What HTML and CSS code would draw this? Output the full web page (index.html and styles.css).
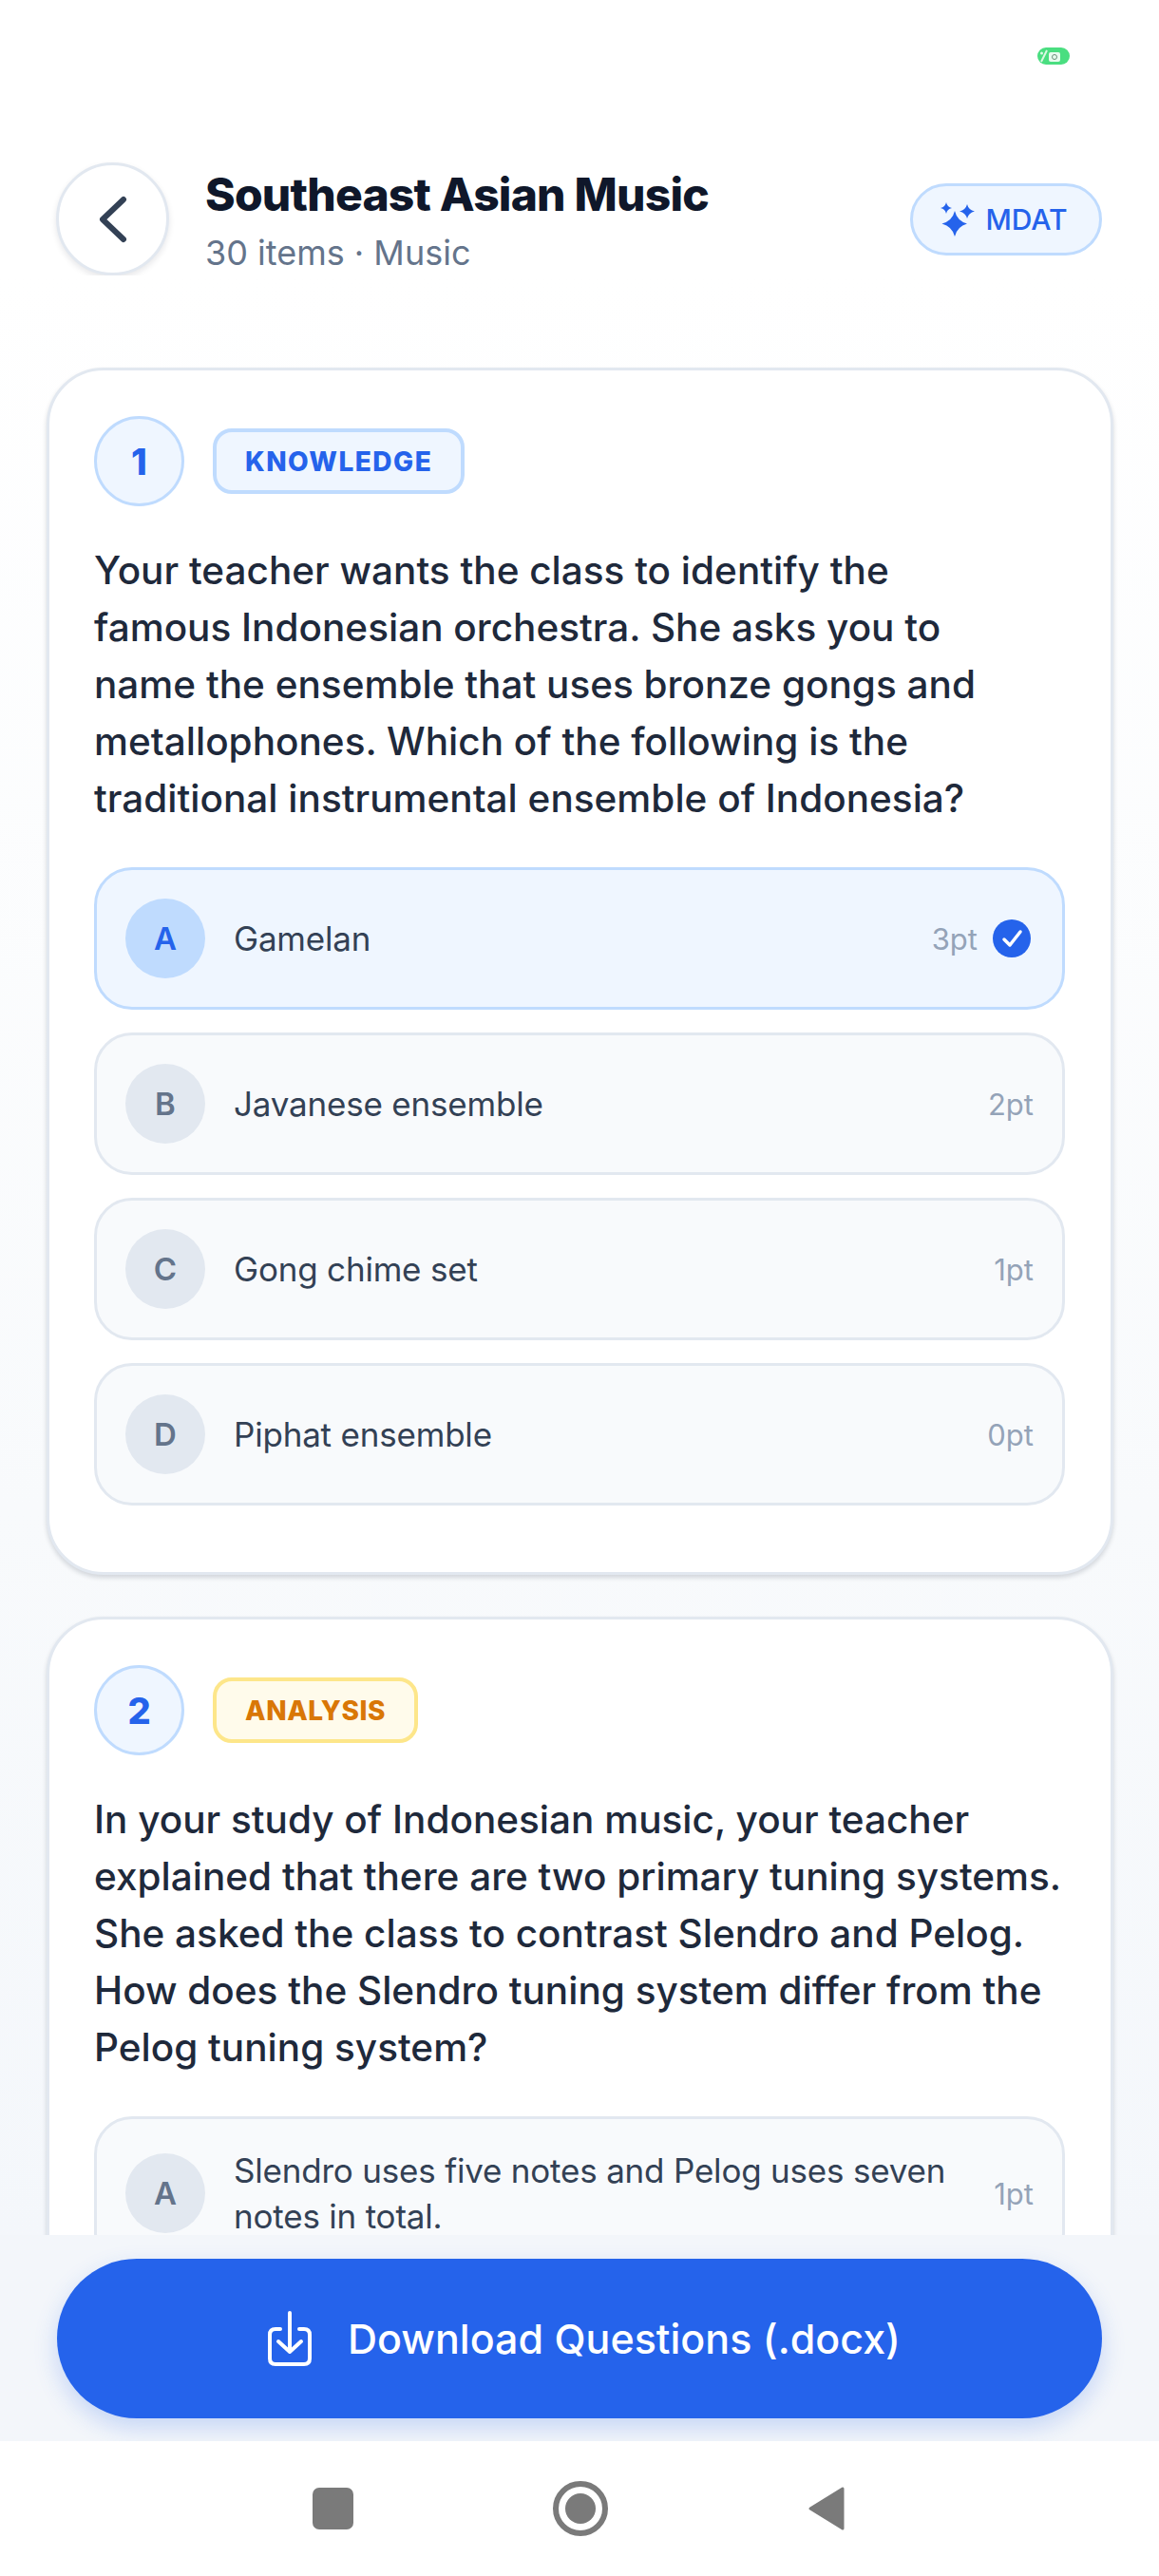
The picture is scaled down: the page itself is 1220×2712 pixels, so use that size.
FILE: index.html
```html
<!DOCTYPE html>
<html lang="en">
<head>
    <meta charset="UTF-8">
    <title>Southeast Asian Music</title>
    <link rel="stylesheet" href="styles.css">
</head>
<body>
    <div class="status-bar">
        <svg class="privacy-dot" viewBox="0 0 34 18">
            <rect width="34" height="18" rx="9" fill="#4ade80"/>
            <path d="M4 15 L10 3" stroke="#dcf9e4" stroke-width="2"/>
            <circle cx="4.500" cy="6" r="1.500" fill="#dcf9e4"/>
            <rect x="12" y="5" width="12" height="10" rx="2" fill="#e8fbee"/>
            <circle cx="18" cy="10" r="2.500" fill="none" stroke="#6b8f7a" stroke-width="1"/>
        </svg>
    </div>

    <div class="header">
        <button class="back-btn">
            <svg viewBox="0 0 40 60" width="40" height="60">
                <path d="M31 9 L9 30 L31 51" fill="none" stroke="#334155" stroke-width="6" stroke-linecap="round" stroke-linejoin="round"/>
            </svg>
        </button>
        <div class="header-text">
            <h1 class="title">Southeast Asian Music</h1>
            <p class="subtitle">30 items · Music</p>
        </div>
        <div class="mdat-pill">
            <svg viewBox="0 0 36 36" width="36" height="36">
                <path d="M15 9 Q17.500 19.500 28 22.500 Q17.500 25.500 15 36 Q12.500 25.500 1.500 22.500 Q12.500 19.500 15 9 Z" fill="#2563eb"/>
                <path d="M6 0 Q7 5 12 6 Q7 7 6 12 Q5 7 0 6 Q5 5 6 0 Z" fill="#2563eb"/>
                <path d="M28 2 Q29.500 8 36 9.500 Q29.500 11 28 17 Q26.500 11 20 9.500 Q26.500 8 28 2 Z" fill="#2563eb"/>
            </svg>
            <span>MDAT</span>
        </div>
    </div>

    <div class="scroll-area">
        <div class="card">
            <div class="card-top">
                <div class="num">1</div>
                <div class="tag tag-blue">KNOWLEDGE</div>
            </div>
            <p class="question">Your teacher wants the class to identify the<br>famous Indonesian orchestra. She asks you to<br>name the ensemble that uses bronze gongs and<br>metallophones. Which of the following is the<br>traditional instrumental ensemble of Indonesia?</p>
            <div class="option correct">
                <div class="letter">A</div>
                <div class="option-text">Gamelan</div>
                <div class="points">3pt</div>
                <svg class="check" viewBox="0 0 40 40" width="40" height="40">
                    <circle cx="20" cy="20" r="20" fill="#2563eb"/>
                    <path d="M12 21 L18 27 L29 13" fill="none" stroke="#fff" stroke-width="3.500" stroke-linecap="round" stroke-linejoin="round"/>
                </svg>
            </div>
            <div class="option">
                <div class="letter">B</div>
                <div class="option-text">Javanese ensemble</div>
                <div class="points">2pt</div>
            </div>
            <div class="option">
                <div class="letter">C</div>
                <div class="option-text">Gong chime set</div>
                <div class="points">1pt</div>
            </div>
            <div class="option">
                <div class="letter">D</div>
                <div class="option-text">Piphat ensemble</div>
                <div class="points">0pt</div>
            </div>
        </div>

        <div class="card">
            <div class="card-top">
                <div class="num">2</div>
                <div class="tag tag-amber">ANALYSIS</div>
            </div>
            <p class="question">In your study of Indonesian music, your teacher<br>explained that there are two primary tuning systems.<br>She asked the class to contrast Slendro and Pelog.<br>How does the Slendro tuning system differ from the<br>Pelog tuning system?</p>
            <div class="option">
                <div class="letter">A</div>
                <div class="option-text">Slendro uses five notes and Pelog uses seven<br>notes in total.</div>
                <div class="points">1pt</div>
            </div>
        </div>
    </div>

    <div class="footer">
        <button class="download-btn">
            <svg viewBox="0 0 46 58" width="46" height="58">
                <path d="M13 19 H8 Q2 19 2 25 V50 Q2 56 8 56 H38 Q44 56 44 50 V25 Q44 19 38 19 H33" fill="none" stroke="#fff" stroke-width="4" stroke-linecap="round"/>
                <path d="M23 2 V43 M11 32 L23 43 L35 32" fill="none" stroke="#fff" stroke-width="4" stroke-linecap="round" stroke-linejoin="round"/>
            </svg>
            <span>Download Questions (.docx)</span>
        </button>
    </div>

    <div class="nav-bar">
        <div class="nav-square"></div>
        <div class="nav-circle"><div class="nav-dot"></div></div>
        <svg viewBox="0 0 40 48" width="40" height="48">
            <path d="M37 3 V45 L3 24 Z" fill="#7a7a7a" stroke="#7a7a7a" stroke-width="3" stroke-linejoin="round"/>
        </svg>
    </div>
</body>
</html>
```

FILE: styles.css
```css
:root {
    --blue: #2563eb;
    --blue-light: #eff6ff;
    --blue-border: #bfdbfe;
    --ink: #0f172a;
    --text: #334155;
    --gray: #64748b;
    --muted: #94a3b8;
    --line: #e2e8f0;
}

* {
    box-sizing: border-box;
}

body {
    font-family: 'Inter', 'Noto Sans', sans-serif;
    margin: 0;
    height: 2712px;
    display: flex;
    flex-direction: column;
    overflow: hidden;
    background: #fff;
}

.status-bar {
    height: 171px;
    padding: 50px 94px 0 0;
    display: flex;
    justify-content: flex-end;
    align-items: flex-start;
}

.privacy-dot {
    width: 34px;
    height: 18px;
}

.header {
    height: 119px;
    padding: 0 60px 0 59px;
    display: flex;
    align-items: center;
    flex-shrink: 0;
}

.back-btn {
    width: 119px;
    height: 119px;
    border-radius: 50%;
    border: 3px solid var(--line);
    background: #fff;
    box-shadow: 0 3px 6px rgba(15, 23, 42, 0.1);
    display: flex;
    justify-content: center;
    align-items: center;
    padding: 0;
    flex-shrink: 0;
}

.header-text {
    margin-left: 38px;
    padding-top: 3px;
    flex: 1;
}

.title {
    font-size: 48px;
    line-height: 60px;
    font-weight: 800;
    color: var(--ink);
    margin: 0 0 7px;
    letter-spacing: -0.8px;
}

.subtitle {
    font-size: 36px;
    line-height: 48px;
    color: var(--gray);
    margin: 0;
}

.mdat-pill {
    width: 202px;
    height: 76px;
    border-radius: 38px;
    border: 3px solid var(--blue-border);
    background: var(--blue-light);
    display: flex;
    justify-content: center;
    align-items: center;
    gap: 11px;
    padding-right: 4px;
    color: var(--blue);
    font-size: 30px;
    font-weight: 500;
}

.scroll-area {
    flex: 1;
    min-height: 0;
    overflow: hidden;
    padding: 97px 48px 0 49px;
    background: linear-gradient(#fff 0, #f8fafc 1300px, #f4f7fb 100%);
}

.card {
    background: #fff;
    border: 3px solid var(--line);
    border-radius: 60px;
    padding: 48px 48px 46px 47px;
    margin-bottom: 44px;
    box-shadow: 0 3px 5px rgba(15, 23, 42, 0.16);
}

.card-top {
    display: flex;
    align-items: center;
    gap: 30px;
}

.num {
    width: 95px;
    height: 95px;
    border-radius: 50%;
    border: 3px solid var(--blue-border);
    background: var(--blue-light);
    color: var(--blue);
    font-size: 38px;
    font-weight: 800;
    display: flex;
    justify-content: center;
    align-items: center;
}

.tag {
    height: 69px;
    padding: 0 30px;
    border-radius: 20px;
    border: 4px solid;
    font-size: 28px;
    font-weight: 800;
    letter-spacing: 1.500px;
    display: flex;
    align-items: center;
}

.tag-blue {
    color: var(--blue);
    background: var(--blue-light);
    border-color: var(--blue-border);
}

.tag-amber {
    color: #d97706;
    background: #fffbeb;
    border-color: #fde68a;
    letter-spacing: 0.6px;
}

.question {
    font-size: 40.500px;
    line-height: 60px;
    font-weight: 450;
    color: #1e293b;
    margin: 38px 0 42px;
    white-space: nowrap;
}

.option {
    display: flex;
    align-items: center;
    padding: 30px;
    border: 3px solid var(--line);
    border-radius: 40px;
    background: #f8fafc;
    margin-bottom: 24px;
}

.option.correct {
    background: var(--blue-light);
    border-color: var(--blue-border);
}

.letter {
    width: 84px;
    height: 84px;
    border-radius: 50%;
    background: var(--line);
    color: var(--gray);
    font-size: 33px;
    font-weight: 600;
    display: flex;
    justify-content: center;
    align-items: center;
    flex-shrink: 0;
}

.correct .letter {
    background: var(--blue-border);
    color: var(--blue);
}

.option-text {
    flex: 1;
    margin-left: 30px;
    font-size: 35px;
    line-height: 48px;
    letter-spacing: -0.2px;
    color: var(--text);
    white-space: nowrap;
}

.points {
    margin-left: 24px;
    font-size: 31px;
    color: var(--muted);
}

.check {
    margin: 0 3px 0 16px;
    flex-shrink: 0;
}

.footer {
    height: 217px;
    flex-shrink: 0;
    background: #f3f6fa;
    padding: 25px 60px 0;
}

.download-btn {
    width: 100%;
    height: 168px;
    border: none;
    border-radius: 84px;
    background: var(--blue);
    color: #fff;
    font-family: inherit;
    font-size: 43px;
    font-weight: 500;
    display: flex;
    justify-content: center;
    align-items: center;
    gap: 38px;
    padding: 0 0 0 10px;
    box-shadow: 0 10px 24px rgba(37, 99, 235, 0.22);
}

.nav-bar {
    height: 142px;
    flex-shrink: 0;
    background: #fff;
    display: flex;
    justify-content: center;
    align-items: center;
    gap: 210px;
    padding-right: 2px;
}

.nav-square {
    width: 43px;
    height: 44px;
    border-radius: 7px;
    background: #7a7a7a;
}

.nav-circle {
    width: 58px;
    height: 58px;
    border-radius: 50%;
    border: 6px solid #7a7a7a;
    display: flex;
    justify-content: center;
    align-items: center;
}

.nav-dot {
    width: 32px;
    height: 32px;
    border-radius: 50%;
    background: #7a7a7a;
}
```
